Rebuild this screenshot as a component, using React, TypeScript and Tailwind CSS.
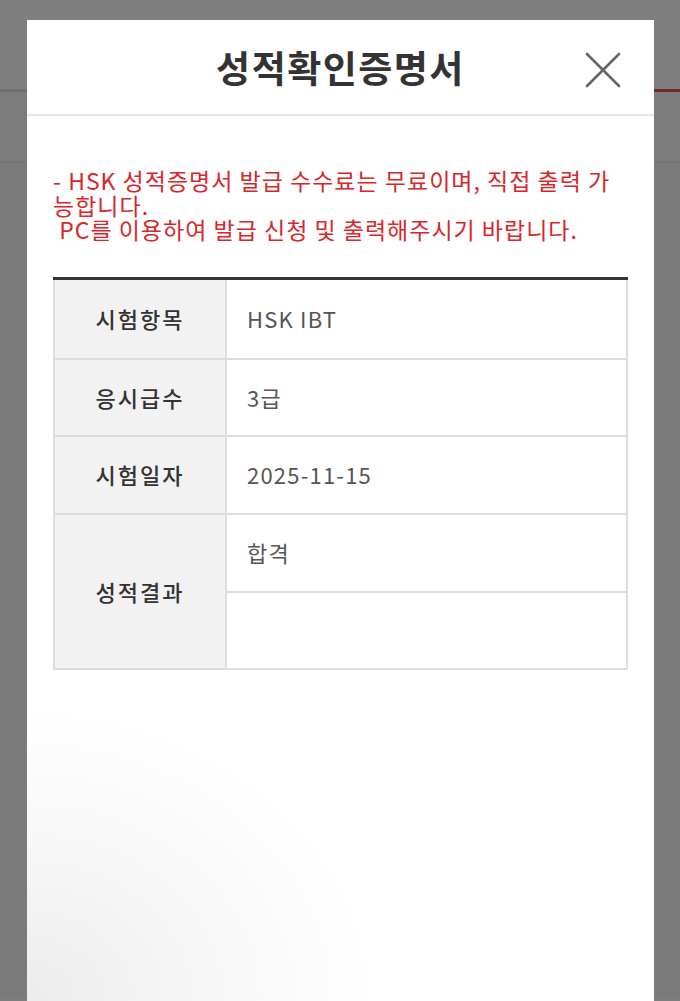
import React from 'react';

type Row = { label: string; value: string };

const rows: Row[] = [
  { label: '시험항목', value: 'HSK IBT' },
  { label: '응시급수', value: '3급' },
  { label: '시험일자', value: '2025-11-15' },
];

const CloseIcon: React.FC = () => (
  <svg width="36" height="36" viewBox="0 0 36 36" fill="none">
    <path d="M2 2L34 34M34 2L2 34" stroke="#666666" strokeWidth="2.6" strokeLinecap="round" />
  </svg>
);

const App: React.FC = () => {
  return (
    <div className="relative h-[1001px] w-[680px] overflow-hidden bg-white font-['Noto_Sans_CJK_KR','Noto_Sans',sans-serif]">
      {/* page behind the dim layer */}
      <div className="flex flex-col">
        <div className="h-[89px] bg-white" />
        <div className="flex h-[3px]">
          <div className="flex-1 bg-[#dcdcdc]" />
          <div className="w-[26px] bg-[#f04a52]" />
        </div>
        <div className="h-[71px] border-b-2 border-[#e8e8e8] bg-[#f8f8f8]" />
        <div className="h-[836px] bg-[#f6f6f6]" />
      </div>
      <div className="absolute inset-0 bg-black/50" />

      {/* modal */}
      <div className="absolute bottom-0 left-[27px] top-[20px] w-[627px] bg-white bg-[radial-gradient(ellipse_65%_35%_at_0%_100%,#ececec_0%,#f7f7f7_45%,#ffffff_85%)]">
        <div className="relative flex h-[96px] items-center justify-center border-b-2 border-[#e6e6e6]">
          <h1 className="text-[37px] font-bold leading-none tracking-[1.5px] text-[#333333]">성적확인증명서</h1>
          <button className="absolute right-[33px] top-[32px]">
            <CloseIcon />
          </button>
        </div>

        <div className="px-[26px] pt-[52px]">
          <p className="break-all text-[23px] leading-[24.5px] tracking-[1px] text-[#d8262a]">
            - HSK 성적증명서 발급 수수료는 무료이며, 직접 출력 가능합니다.
            <br />
            {'\u00a0'}PC를 이용하여 발급 신청 및 출력해주시기 바랍니다.
          </p>

          <table className="mt-[35px] w-full border-collapse border-t-[3px] border-t-[#333333]">
            <tbody>
              {rows.map((row, i) => (
                <tr key={row.label} className={i === 0 ? 'h-[80.5px]' : 'h-[77.5px]'}>
                  <th className="w-[172px] border-2 border-t-0 border-[#dddddd] bg-[#f2f2f2] text-center text-[22px] font-medium tracking-[2px] text-[#333333]">
                    {row.label}
                  </th>
                  <td className="border-2 border-t-0 border-[#dddddd] pl-[20px] text-[22px] tracking-[1.2px] text-[#555555]">
                    {row.value}
                  </td>
                </tr>
              ))}
              <tr className="h-[78px]">
                <th
                  rowSpan={2}
                  className="w-[172px] border-2 border-[#dddddd] bg-[#f2f2f2] text-center text-[22px] font-medium tracking-[2px] text-[#333333]"
                >
                  성적결과
                </th>
                <td className="border-2 border-[#dddddd] pl-[20px] text-[22px] tracking-[1.2px] text-[#555555]">합격</td>
              </tr>
              <tr className="h-[77px]">
                <td className="border-2 border-[#dddddd] pl-[20px] text-[22px] text-[#555555]" />
              </tr>
            </tbody>
          </table>
        </div>
      </div>
    </div>
  );
};

export default App;
